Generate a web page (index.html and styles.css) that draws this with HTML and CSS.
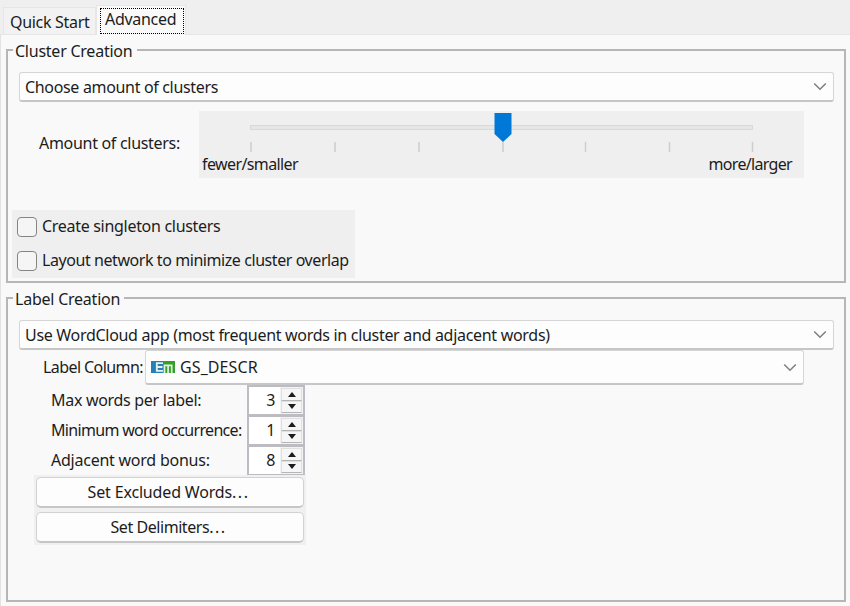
FILE: index.html
```html
<!DOCTYPE html>
<html lang="en">
<head>
<meta charset="utf-8">
<title>Cluster options</title>
<link rel="stylesheet" href="styles.css">
</head>
<body>
<nav class="tabs">
  <div class="tab"><span class="t-quick">Quick Start</span></div>
  <div class="tab active"><div class="focus"><span class="t-adv">Advanced</span></div></div>
</nav>
<main class="panel">
  <section class="group cluster">
    <h2 class="legend"><span class="t-cc">Cluster Creation</span></h2>
    <div class="combo wide"><span class="t-choose">Choose amount of clusters</span>
      <svg class="chev" width="14" height="9" viewBox="0 0 14 9"><path d="M1.2 1.5 7 7.2l5.8-5.7"/></svg></div>
    <div class="amount">
      <div class="amount-label"><span class="t-amount">Amount of clusters:</span></div>
      <div class="slider">
        <svg class="scale" width="505" height="44" viewBox="0 0 505 44">
          <rect class="track" x=".5" y="15.5" width="502" height="4"/>
          <path class="ticks" d="M1 32v10M85 32v10M169 32v10M253 32v10M335.500 32v10M419.500 32v10M502.500 32v10"/>
          <path class="thumb" d="M244.500 3h17v21l-8.500 8-8.500-8z"/>
        </svg>
        <div class="ends"><span class="t-fewer">fewer/smaller</span><span class="t-more">more/larger</span></div>
      </div>
    </div>
    <div class="checks">
      <label class="check"><i class="box"></i><span class="t-create">Create singleton clusters</span></label>
      <label class="check"><i class="box"></i><span class="t-layout">Layout network to minimize cluster overlap</span></label>
    </div>
  </section>
  <section class="group labels">
    <h2 class="legend"><span class="t-lc">Label Creation</span></h2>
    <div class="combo wide"><span class="t-use">Use WordCloud app (most frequent words in cluster and adjacent words)</span>
      <svg class="chev" width="14" height="9" viewBox="0 0 14 9"><path d="M1.2 1.5 7 7.2l5.8-5.7"/></svg></div>
    <div class="column-row">
      <div class="column-label"><span class="t-col">Label Column:</span></div>
      <div class="combo column">
        <svg class="em" width="24" height="12" viewBox="0 0 24 12"><path fill="#2580b8" d="M0 0h12v12H0z"/><path fill="#33a02c" d="M12 0h12v12H12z"/><path fill="none" stroke="#e4f2ee" stroke-width="1.8" d="M12 2.200H5.800v7.600H12M6 6h5.500"/><path fill="none" stroke="#e4f2dc" stroke-width="1.700" d="M13.500 12V4.300h7.200V12M17.100 4.500V12"/></svg>
        <span class="t-gs">GS_DESCR</span>
        <svg class="chev" width="14" height="9" viewBox="0 0 14 9"><path d="M1.2 1.500 7 7.200l5.800-5.700"/></svg>
      </div>
    </div>
    <div class="spin-row"><div class="spin-label"><span class="t-max">Max words per label:</span></div>
      <div class="spin"><b>3</b><div class="arrows"><i><svg width="8" height="5"><path d="M4 0 8 5H0z"/></svg></i><i><svg width="8" height="5"><path d="M0 0h8L4 5z"/></svg></i></div></div></div>
    <div class="spin-row"><div class="spin-label"><span class="t-min">Minimum word occurrence:</span></div>
      <div class="spin"><b>1</b><div class="arrows"><i><svg width="8" height="5"><path d="M4 0 8 5H0z"/></svg></i><i><svg width="8" height="5"><path d="M0 0h8L4 5z"/></svg></i></div></div></div>
    <div class="spin-row"><div class="spin-label"><span class="t-adj">Adjacent word bonus:</span></div>
      <div class="spin"><b>8</b><div class="arrows"><i><svg width="8" height="5"><path d="M4 0 8 5H0z"/></svg></i><i><svg width="8" height="5"><path d="M0 0h8L4 5z"/></svg></i></div></div></div>
    <div class="buttons">
      <button class="btn"><span class="t-excl">Set Excluded Words<span class="dots">...</span></span></button>
      <button class="btn"><span class="t-delim">Set Delimiters<span class="dots">...</span></span></button>
    </div>
  </section>
</main>
</body>
</html>
```

FILE: styles.css
```css
* { box-sizing: border-box; }
body { margin: 0; width: 850px; height: 606px; overflow: hidden; background: #f9f9f9; color: #1c1c1c; font: 16px/20px "Noto Sans", sans-serif; letter-spacing: -0.3px; display: flex; flex-direction: column; }
span { white-space: nowrap; }
.tabs { height: 35px; flex: none; display: flex; align-items: flex-end; background: #efefef; border-bottom: 1px solid #e6e6e6; padding-left: 3px; }
.tab { height: 27px; width: 93px; border: 1px solid #e6e6e6; border-bottom: 0; background: #f2f2f2; padding: 4px 0 0 6px; }
.tab.active { height: 30px; width: 90px; background: #f9f9f9; padding: 2px 0 0 3px; margin-bottom: -1px; }
.focus { width: 84px; height: 26px; border: 1px dotted #000; padding: 1px 0 0 4px; line-height: 19px; }
.panel { flex: 1; border-left: 1px solid #e2e2e2; padding: 14px 4px 4px 5px; display: flex; flex-direction: column; gap: 14px; }
.group { border: 2px solid #b6b6b6; }
.cluster { height: 234px; }
.labels { height: 305px; }
.legend { font: inherit; margin: -10px 0 0 5px; padding: 0 5px 0 2px; height: 20px; width: 124px; background: #f9f9f9; }
.labels .legend { width: 111px; }
.combo { display: flex; align-items: center; background: #fdfdfd; border: 1px solid #d6d6d6; border-bottom: 2px solid #c6c6c6; border-radius: 3px; padding: 0 6px; }
.wide { margin: 11px 0 0 11px; width: 815px; height: 30px; padding-left: 5px; }
.chev { margin-left: auto; fill: none; stroke: #808080; stroke-width: 1.600; }
.amount { display: flex; margin: 9px 0 0 11px; }
.amount-label { width: 180px; padding: 22px 0 0 20px; }
.slider { width: 605px; height: 67px; background: #efefef; }
.scale { display: block; margin: -1px 0 0 51px; }
.track { fill: #e5e7e6; stroke: #d8d9d9; }
.ticks { stroke: #cdcdcd; stroke-width: 1.500; }
.thumb { fill: #0078d7; }
.ends { display: flex; justify-content: space-between; padding: 0 12px 0 3px; }
.checks { margin: 32px 0 0 4px; width: 343px; height: 68px; background: #efefef; padding: 7px 0 0 5px; display: flex; flex-direction: column; gap: 14px; }
.check { display: flex; align-items: center; height: 20px; }
.check span { margin-top: -2px; }
.box { width: 20px; height: 20px; border: 1.5px solid #858585; border-radius: 4px; background: #f5f5f5; margin-right: 5px; }
.column-row { display: flex; margin-left: 11px; }
.column-label { width: 126px; padding: 7px 0 0 24px; }
.column { width: 659px; height: 35px; padding-left: 5px; }
.em { margin-right: 5px; }
.spin-row { display: flex; height: 30px; margin-left: 43px; }
.spin-label { width: 196px; padding-top: 5px; }
.spin { width: 58px; border: 2px solid #bcbcc2; border-bottom-width: 1px; background: #fff; display: flex; justify-content: flex-end; }
.spin b { font-weight: 400; padding: 3px 5px 0 0; }
.arrows { width: 23px; background: #f3f3f3; display: flex; flex-direction: column; padding: 1px; }
.arrows i { flex: 1; display: flex; align-items: center; justify-content: center; border: 1px solid #e0e0e0; border-bottom-color: #b5b5b5; background: #f6f6f6; }
.arrows path { fill: #1c1c1c; }
.buttons { margin-left: 26px; width: 272px; height: 70px; background: #f0f0f0; padding: 2px; display: flex; flex-direction: column; gap: 4px; }
.btn { height: 31px; border: 1px solid #d2d2d2; border-bottom: 2px solid #c6c6c6; border-radius: 5px; background: #fdfdfd; color: inherit; font: inherit; letter-spacing: inherit; padding: 0 3px 0 0; }
.t-cc { letter-spacing: -0.24px; }
.t-lc { letter-spacing: -0.23px; }
.t-choose { letter-spacing: -0.33px; }
.t-fewer { letter-spacing: -0.6px; }
.t-more { letter-spacing: -0.68px; }
.t-layout { letter-spacing: -0.43px; }
.t-col { letter-spacing: -0.58px; }
.t-gs { letter-spacing: 0.1px; }
.t-min { letter-spacing: -0.68px; }
.t-adj { letter-spacing: -0.24px; }
.t-excl { letter-spacing: -0.16px; }
.t-delim { letter-spacing: -0.44px; }
.dots { letter-spacing: 1.5px; }
```
